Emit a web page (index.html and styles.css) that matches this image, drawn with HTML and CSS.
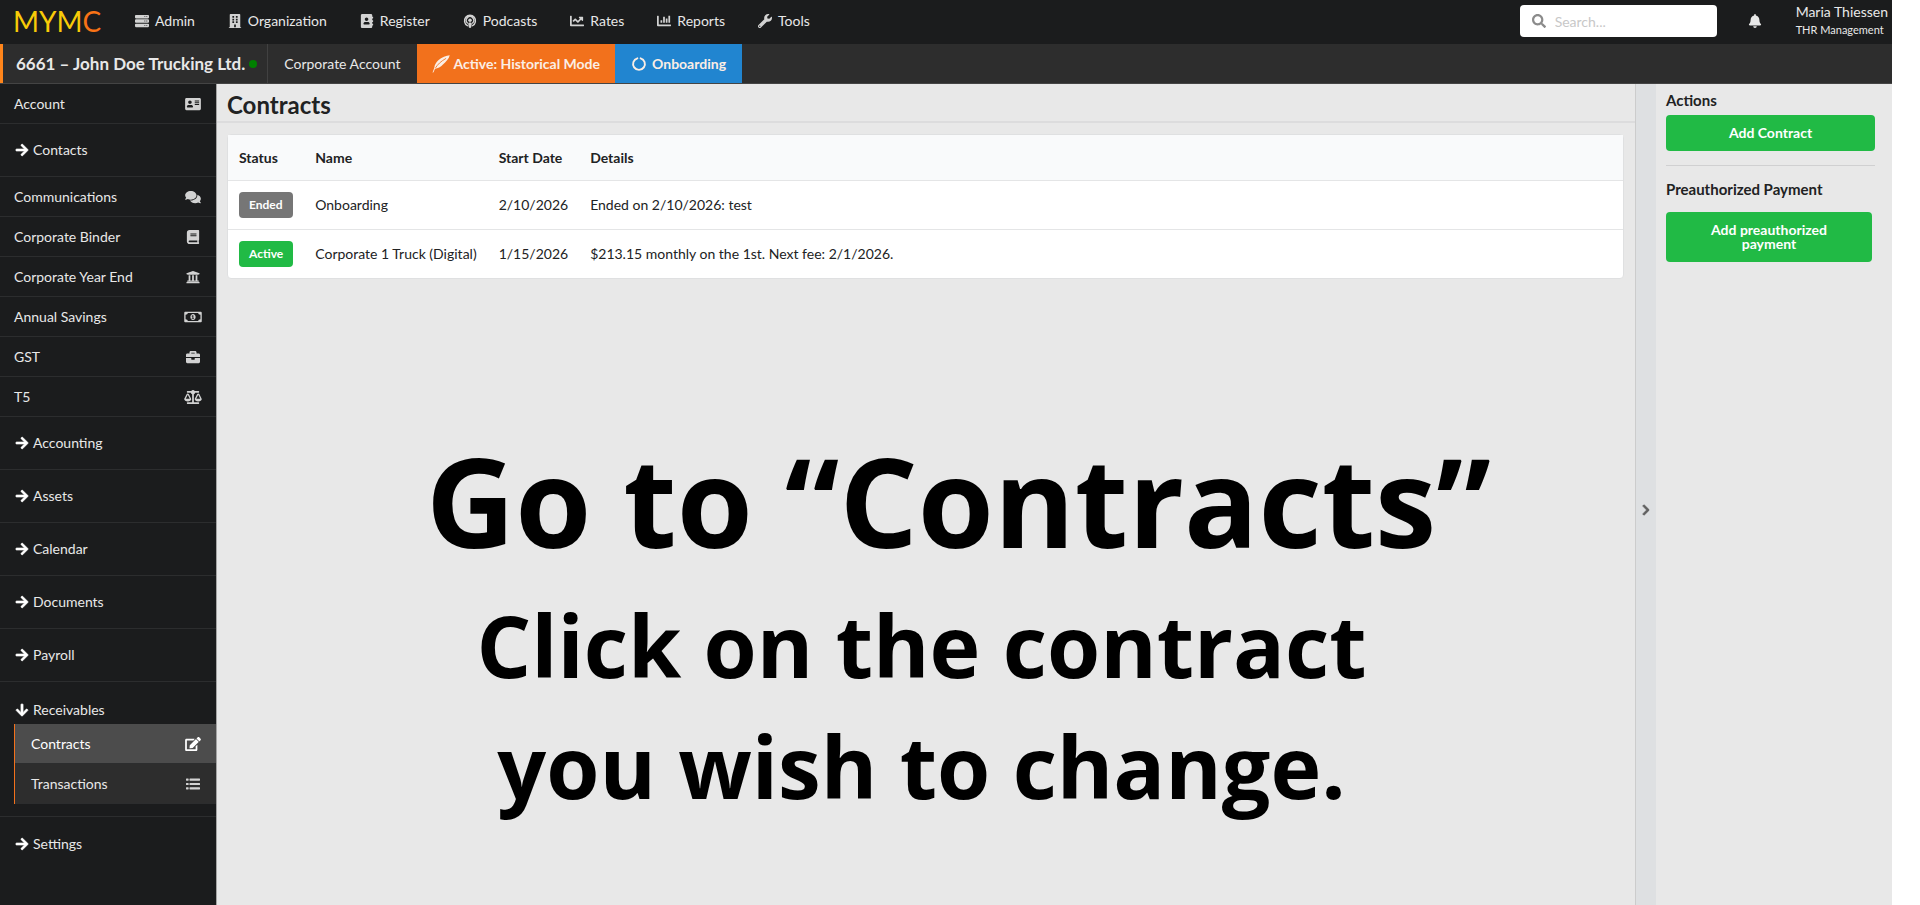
FILE: index.html
```html
<!DOCTYPE html>
<html lang="en">

<head>
    <meta charset="UTF-8">
    <meta name="viewport" content="width=device-width, initial-scale=1">
    <link rel="stylesheet" href="styles.css">
    <title>MYMC - Contracts</title>
</head>

<body>
    <div class="app">
        <header class="topbar">
            <a class="logo" href="#">MYM<span>C</span></a>
            <nav class="topnav">
                <a href="#"><svg class="icon" viewBox="0 0 512 512"><path fill-rule="evenodd" d="M32 32h448c18 0 32 14 32 32v64c0 18-14 32-32 32H32c-18 0-32-14-32-32V64c0-18 14-32 32-32zm312 48v32h32V80zm72 0v32h32V80zM32 192h448c18 0 32 14 32 32v64c0 18-14 32-32 32H32c-18 0-32-14-32-32v-64c0-18 14-32 32-32zm312 48v32h32v-32zm72 0v32h32v-32zM32 352h448c18 0 32 14 32 32v64c0 18-14 32-32 32H32c-18 0-32-14-32-32v-64c0-18 14-32 32-32zm312 48v32h32v-32zm72 0v32h32v-32z"/></svg>Admin</a>
                <a href="#"><svg class="icon" viewBox="0 0 448 512"><path fill-rule="evenodd" d="M436 480h-20V24c0-13-11-24-24-24H56C43 0 32 11 32 24v456H12c-7 0-12 5-12 12v20h448v-20c0-7-5-12-12-12zM128 76h64v64h-64zm128 0h64v64h-64zM128 172h64v64h-64zm128 0h64v64h-64zM128 268h64v64h-64zm128 0h64v64h-64zM192 384h64v96h-64z"/></svg>Organization</a>
                <a href="#"><svg class="icon" viewBox="0 0 448 512"><path fill-rule="evenodd" d="M436 160c7 0 12-5 12-12v-40c0-7-5-12-12-12h-20V48c0-26-22-48-48-48H48C22 0 0 22 0 48v416c0 26 22 48 48 48h320c26 0 48-22 48-48v-48h20c7 0 12-5 12-12v-40c0-7-5-12-12-12h-20v-64h20c7 0 12-5 12-12v-40c0-7-5-12-12-12h-20v-64zM208 128c35 0 64 29 64 64s-29 64-64 64-64-29-64-64 29-64 64-64zm112 237c0 11-10 19-22 19H118c-12 0-22-8-22-19v-19c0-32 30-58 67-58h90c37 0 67 26 67 58z"/></svg>Register</a>
                <a href="#"><svg class="icon" viewBox="0 0 448 512"><path d="M267 489c-5 17-24 23-43 23s-38-6-43-23c-8-28-21-102-21-133 0-35 31-44 64-44s64 9 64 44c0 31-13 105-21 133z"/><circle cx="224" cy="224" r="64"/><path fill="none" stroke="currentColor" stroke-width="52" stroke-linecap="round" d="M126 327a137 137 0 1 1 196 0M130 426a201 201 0 1 1 188 0"/></svg>Podcasts</a>
                <a href="#"><svg class="icon" viewBox="0 0 512 512"><path d="M496 384H64V80c0-8.84-7.16-16-16-16H16C7.16 64 0 71.16 0 80v336c0 17.67 14.33 32 32 32h464c8.84 0 16-7.16 16-16v-32c0-8.84-7.16-16-16-16zM464 96H345.94c-21.38 0-32.09 25.85-16.97 40.97l32.4 32.4L288 242.75l-73.37-73.37c-12.5-12.5-32.76-12.5-45.25 0l-68.69 68.69c-6.25 6.25-6.25 16.38 0 22.63l22.62 22.62c6.25 6.25 16.38 6.25 22.63 0L192 237.25l73.37 73.37c12.5 12.5 32.76 12.5 45.25 0l96-96 32.4 32.4c15.12 15.12 40.97 4.41 40.97-16.97V112c.01-8.84-7.15-16-15.99-16z"/></svg>Rates</a>
                <a href="#"><svg class="icon" viewBox="0 0 512 512"><path d="M496 384H64V80c0-8.84-7.16-16-16-16H16C7.16 64 0 71.16 0 80v336c0 17.67 14.33 32 32 32h464c8.84 0 16-7.16 16-16v-32c0-8.84-7.16-16-16-16zM141 224h38c7 0 13 6 13 13v70c0 7-6 13-13 13h-38c-7 0-13-6-13-13v-70c0-7 6-13 13-13zm96-128h38c7 0 13 6 13 13v198c0 7-6 13-13 13h-38c-7 0-13-6-13-13V109c0-7 6-13 13-13zm96 64h38c7 0 13 6 13 13v134c0 7-6 13-13 13h-38c-7 0-13-6-13-13V173c0-7 6-13 13-13zm96-96h38c7 0 13 6 13 13v230c0 7-6 13-13 13h-38c-7 0-13-6-13-13V77c0-7 6-13 13-13z"/></svg>Reports</a>
                <a href="#"><svg class="icon" viewBox="0 0 512 512"><path d="M507.73 109.1c-2.24-9.03-13.54-12.09-20.12-5.51l-74.36 74.36-67.88-11.31-11.31-67.88 74.36-74.36c6.62-6.62 3.43-17.9-5.66-20.16-47.38-11.74-99.55.91-136.58 37.93-39.64 39.64-50.55 97.1-34.05 147.2L18.74 402.76c-24.99 24.99-24.99 65.51 0 90.5 24.99 24.99 65.51 24.99 90.5 0l213.21-213.21c50.12 16.71 107.47 5.68 147.37-34.22 37.07-37.07 49.7-89.32 37.91-136.73zM64 472c-13.25 0-24-10.75-24-24 0-13.26 10.75-24 24-24s24 10.74 24 24c0 13.25-10.75 24-24 24z"/></svg>Tools</a>
            </nav>
            <label class="search">
                <svg class="icon" viewBox="0 0 512 512"><path d="M505 442.7L405.3 343c-4.5-4.5-10.6-7-17-7H372c27.6-35.3 44-79.7 44-128C416 93.1 322.9 0 208 0S0 93.1 0 208s93.1 208 208 208c48.3 0 92.7-16.4 128-44v16.3c0 6.4 2.5 12.5 7 17l99.7 99.7c9.4 9.4 24.6 9.4 33.9 0l28.3-28.3c9.4-9.4 9.4-24.6.1-34zM208 336c-70.7 0-128-57.2-128-128 0-70.7 57.2-128 128-128 70.7 0 128 57.2 128 128 0 70.7-57.2 128-128 128z"/></svg>
                <input type="text" name="search" placeholder="Search..." aria-label="Search">
            </label>
            <button class="bell" type="button" aria-label="Notifications">
                <svg class="icon" viewBox="0 0 448 512"><path d="M224 512c35.32 0 63.97-28.65 63.97-64H160.03c0 35.35 28.65 64 63.97 64zm215.39-149.71c-19.32-20.76-55.47-51.99-55.47-154.29 0-77.7-54.48-139.9-127.94-155.16V32c0-17.67-14.32-32-31.98-32s-31.98 14.33-31.98 32v20.84C118.56 68.1 64.08 130.3 64.08 208c0 102.3-36.15 133.53-55.47 154.29-6 6.45-8.66 14.16-8.61 21.71.11 16.4 12.98 32 32.1 32h383.8c19.12 0 32-15.6 32.1-32 .05-7.55-2.61-15.27-8.61-21.71z"/></svg>
            </button>
            <a class="user" href="#">Maria Thiessen<small>THR Management</small></a>
        </header>

        <div class="account-bar">
            <a class="account-name" href="#">6661 – John Doe Trucking Ltd.<span class="dot"></span></a>
            <a class="account-type" href="#">Corporate Account</a>
            <a class="mode orange" href="#"><svg class="icon quill" viewBox="0 0 512 512"><path d="M505 4C410 10 270 60 180 150 110 220 70 290 66 360L26 470c-6 18-8 30-6 38 10 0 20-10 26-24l40-94c80-6 160-50 226-118C392 192 480 110 505 4z"/><path class="vein" d="M100 366C160 270 250 180 400 96"/></svg>Active: Historical Mode</a>
            <a class="mode blue" href="#"><svg class="icon" viewBox="0 0 512 512"><path fill="none" stroke="currentColor" stroke-width="70" stroke-linecap="round" d="M316 48a216 216 0 1 1-120 0"/></svg>Onboarding</a>
        </div>

        <div class="body">
            <nav class="sidebar">
                <a class="item" href="#">Account<svg class="icon" viewBox="0 0 576 512"><path fill-rule="evenodd" d="M48 32h480c26 0 48 22 48 48v352c0 26-22 48-48 48H48c-26 0-48-22-48-48V80c0-26 22-48 48-48zm128 96c-35 0-64 29-64 64s29 64 64 64 64-29 64-64-29-64-64-64zm112 237v-19c0-32-30-58-67-58h-90c-37 0-67 26-67 58v19c0 11 10 19 22 19h180c12 0 22-8 22-19zM352 128v32h160v-32zm0 64v32h160v-32zm0 64v32h160v-32z"/></svg></a>
                <a class="group" href="#"><svg class="icon" viewBox="0 0 448 512"><path d="M190.5 66.9l22.2-22.2c9.4-9.4 24.6-9.4 33.9 0L441 239c9.4 9.4 9.4 24.6 0 33.9L246.6 467.3c-9.4 9.4-24.6 9.4-33.9 0l-22.2-22.2c-9.5-9.5-9.3-25 .4-34.3L311.4 296H24c-13.3 0-24-10.7-24-24v-32c0-13.3 10.7-24 24-24h287.4L190.9 101.2c-9.8-9.3-10-24.8-.4-34.3z"/></svg>Contacts</a>
                <a class="item" href="#">Communications<svg class="icon" viewBox="0 0 576 512"><path d="M416 192c0-88.4-93.1-160-208-160S0 103.6 0 192c0 34.3 14.1 65.9 38 92-13.4 30.2-35.5 54.2-35.8 54.5-2.2 2.3-2.8 5.7-1.5 8.7S4.8 352 8 352c36.6 0 66.9-12.3 88.7-25 32.2 15.7 70.3 25 111.3 25 114.9 0 208-71.6 208-160zm122 220c23.9-26 38-57.7 38-92 0-66.9-53.5-124.2-129.3-148.1.9 6.6 1.3 13.3 1.3 20.1 0 105.9-107.7 192-240 192-10.8 0-21.3-.8-31.7-1.9C207.8 439.6 281.8 480 368 480c41 0 79.1-9.2 111.3-25 21.8 12.7 52.1 25 88.7 25 3.2 0 6.1-1.9 7.3-4.8 1.3-2.9.7-6.3-1.5-8.7-.3-.3-22.4-24.2-35.8-54.5z"/></svg></a>
                <a class="item" href="#">Corporate Binder<svg class="icon" viewBox="0 0 448 512"><path d="M448 360V24c0-13.3-10.7-24-24-24H96C43 0 0 43 0 96v320c0 53 43 96 96 96h328c13.3 0 24-10.7 24-24v-16c0-7.5-3.5-14.3-8.9-18.7-4.2-15.4-4.2-59.3 0-74.7 5.4-4.3 8.9-11.1 8.9-18.6zM128 134c0-3.3 2.7-6 6-6h212c3.3 0 6 2.7 6 6v20c0 3.3-2.7 6-6 6H134c-3.3 0-6-2.7-6-6v-20zm0 64c0-3.3 2.7-6 6-6h212c3.3 0 6 2.7 6 6v20c0 3.3-2.7 6-6 6H134c-3.3 0-6-2.7-6-6v-20zm253.4 250H96c-17.7 0-32-14.3-32-32 0-17.6 14.4-32 32-32h285.4c-1.9 17.1-1.9 46.9 0 64z"/></svg></a>
                <a class="item" href="#">Corporate Year End<svg class="icon" viewBox="0 0 512 512"><path d="M496 128v16a8 8 0 0 1-8 8h-24v12c0 6.627-5.373 12-12 12H60c-6.627 0-12-5.373-12-12v-12H24a8 8 0 0 1-8-8v-16a8 8 0 0 1 4.941-7.392l232-88a7.996 7.996 0 0 1 6.118 0l232 88A8 8 0 0 1 496 128zm-24 304H40c-13.255 0-24 10.745-24 24v16a8 8 0 0 0 8 8h464a8 8 0 0 0 8-8v-16c0-13.255-10.745-24-24-24zM96 192v192H60c-6.627 0-12 5.373-12 12v20h416v-20c0-6.627-5.373-12-12-12h-36V192h-64v192h-64V192h-64v192h-64V192H96z"/></svg></a>
                <a class="item" href="#">Annual Savings<svg class="icon" viewBox="0 0 640 512"><path fill-rule="evenodd" d="M32 64h576c18 0 32 14 32 32v320c0 18-14 32-32 32H32c-18 0-32-14-32-32V96c0-18 14-32 32-32zm96 48c0 35-29 64-80 64v160c51 0 80 29 80 64h384c0-35 29-64 80-64V176c-51 0-80-29-80-64zm192 32c53 0 96 50 96 112s-43 112-96 112-96-50-96-112 43-112 96-112zm-16 48l-32 20v24h26v60h-26v24h88v-24h-26V192z"/></svg></a>
                <a class="item" href="#">GST<svg class="icon" viewBox="0 0 512 512"><path d="M320 336c0 8.84-7.16 16-16 16h-96c-8.84 0-16-7.16-16-16v-48H0v144c0 25.6 22.4 48 48 48h416c25.6 0 48-22.4 48-48V288H320v48zm144-208h-80V80c0-25.6-22.4-48-48-48H176c-25.6 0-48 22.4-48 48v48H48c-25.6 0-48 22.4-48 48v80h512v-80c0-25.6-22.4-48-48-48zm-144 0H192V96h128v32z"/></svg></a>
                <a class="item" href="#">T5<svg class="icon" viewBox="0 0 640 512"><path d="M256 336h-.02c0-16.18 1.34-8.73-85.05-181.51-17.65-35.29-68.19-35.36-85.87 0C-2.06 328.75.02 320.33.02 336H0c0 44.18 57.31 80 128 80s128-35.82 128-80zM128 176l72 144H56l72-144zm511.98 160c0-16.18 1.34-8.73-85.05-181.51-17.65-35.29-68.19-35.36-85.87 0-87.12 174.26-85.04 165.84-85.04 181.51H384c0 44.18 57.31 80 128 80s128-35.82 128-80h-.02zM440 320l72-144 72 144H440zm88 128H352V153.25c23.51-10.29 41.16-31.48 46.39-57.25H528c8.84 0 16-7.16 16-16V48c0-8.84-7.16-16-16-16H383.64C369.04 12.68 346.09 0 320 0s-49.04 12.68-63.64 32H112c-8.84 0-16 7.16-16 16v32c0 8.84 7.16 16 16 16h129.61c5.23 25.76 22.87 46.96 46.39 57.25V448H112c-8.84 0-16 7.16-16 16v32c0 8.84 7.16 16 16 16h416c8.84 0 16-7.16 16-16v-32c0-8.84-7.16-16-16-16z"/></svg></a>
                <a class="group" href="#"><svg class="icon" viewBox="0 0 448 512"><path d="M190.5 66.9l22.2-22.2c9.4-9.4 24.6-9.4 33.9 0L441 239c9.4 9.4 9.4 24.6 0 33.9L246.6 467.3c-9.4 9.4-24.6 9.4-33.9 0l-22.2-22.2c-9.5-9.5-9.3-25 .4-34.3L311.4 296H24c-13.3 0-24-10.7-24-24v-32c0-13.3 10.7-24 24-24h287.4L190.9 101.2c-9.8-9.3-10-24.8-.4-34.3z"/></svg>Accounting</a>
                <a class="group" href="#"><svg class="icon" viewBox="0 0 448 512"><path d="M190.5 66.9l22.2-22.2c9.4-9.4 24.6-9.4 33.9 0L441 239c9.4 9.4 9.4 24.6 0 33.9L246.6 467.3c-9.4 9.4-24.6 9.4-33.9 0l-22.2-22.2c-9.5-9.5-9.3-25 .4-34.3L311.4 296H24c-13.3 0-24-10.7-24-24v-32c0-13.3 10.7-24 24-24h287.4L190.9 101.2c-9.8-9.3-10-24.8-.4-34.3z"/></svg>Assets</a>
                <a class="group" href="#"><svg class="icon" viewBox="0 0 448 512"><path d="M190.5 66.9l22.2-22.2c9.4-9.4 24.6-9.4 33.9 0L441 239c9.4 9.4 9.4 24.6 0 33.9L246.6 467.3c-9.4 9.4-24.6 9.4-33.9 0l-22.2-22.2c-9.5-9.5-9.3-25 .4-34.3L311.4 296H24c-13.3 0-24-10.7-24-24v-32c0-13.3 10.7-24 24-24h287.4L190.9 101.2c-9.8-9.3-10-24.8-.4-34.3z"/></svg>Calendar</a>
                <a class="group" href="#"><svg class="icon" viewBox="0 0 448 512"><path d="M190.5 66.9l22.2-22.2c9.4-9.4 24.6-9.4 33.9 0L441 239c9.4 9.4 9.4 24.6 0 33.9L246.6 467.3c-9.4 9.4-24.6 9.4-33.9 0l-22.2-22.2c-9.5-9.5-9.3-25 .4-34.3L311.4 296H24c-13.3 0-24-10.7-24-24v-32c0-13.3 10.7-24 24-24h287.4L190.9 101.2c-9.8-9.3-10-24.8-.4-34.3z"/></svg>Documents</a>
                <a class="group" href="#"><svg class="icon" viewBox="0 0 448 512"><path d="M190.5 66.9l22.2-22.2c9.4-9.4 24.6-9.4 33.9 0L441 239c9.4 9.4 9.4 24.6 0 33.9L246.6 467.3c-9.4 9.4-24.6 9.4-33.9 0l-22.2-22.2c-9.5-9.5-9.3-25 .4-34.3L311.4 296H24c-13.3 0-24-10.7-24-24v-32c0-13.3 10.7-24 24-24h287.4L190.9 101.2c-9.8-9.3-10-24.8-.4-34.3z"/></svg>Payroll</a>
                <div class="open-group">
                    <a class="group" href="#"><svg class="icon" viewBox="0 0 448 512"><path d="M413.1 222.5l22.2 22.2c9.4 9.4 9.4 24.6 0 33.9L241 473c-9.4 9.4-24.6 9.4-33.9 0L12.7 278.6c-9.4-9.4-9.4-24.6 0-33.9l22.2-22.2c9.5-9.5 25-9.3 34.3.4L184 343.4V56c0-13.3 10.7-24 24-24h32c13.3 0 24 10.7 24 24v287.4l114.8-120.5c9.3-9.8 24.8-10 34.3-.4z"/></svg>Receivables</a>
                    <div class="submenu">
                        <a class="item active" href="#">Contracts<svg class="icon" viewBox="0 0 576 512"><path d="M402.6 83.2l90.2 90.2c3.8 3.8 3.8 10 0 13.8L274.4 405.6l-92.8 10.3c-12.4 1.4-22.9-9.1-21.5-21.5l10.3-92.8L388.8 83.2c3.8-3.8 10-3.8 13.8 0zm162-22.9l-48.8-48.8c-15.2-15.2-39.9-15.2-55.2 0l-35.4 35.4c-3.8 3.8-3.8 10 0 13.8l90.2 90.2c3.8 3.8 10 3.8 13.8 0l35.4-35.4c15.2-15.3 15.2-40 0-55.2zM384 346.2V448H64V128h229.8c3.2 0 6.2-1.3 8.5-3.5l40-40c7.6-7.6 2.2-20.5-8.5-20.5H48C21.5 64 0 85.5 0 112v352c0 26.5 21.5 48 48 48h352c26.5 0 48-21.5 48-48V306.2c0-10.7-12.9-16-20.5-8.5l-40 40c-2.2 2.3-3.5 5.3-3.5 8.5z"/></svg></a>
                        <a class="item" href="#">Transactions<svg class="icon" viewBox="0 0 512 512"><path d="M16 56h64c9 0 16 7 16 16v48c0 9-7 16-16 16H16c-9 0-16-7-16-16V72c0-9 7-16 16-16zm0 160h64c9 0 16 7 16 16v48c0 9-7 16-16 16H16c-9 0-16-7-16-16v-48c0-9 7-16 16-16zm0 160h64c9 0 16 7 16 16v48c0 9-7 16-16 16H16c-9 0-16-7-16-16v-48c0-9 7-16 16-16zM144 56h352c9 0 16 7 16 16v48c0 9-7 16-16 16H144c-9 0-16-7-16-16V72c0-9 7-16 16-16zm0 160h352c9 0 16 7 16 16v48c0 9-7 16-16 16H144c-9 0-16-7-16-16v-48c0-9 7-16 16-16zm0 160h352c9 0 16 7 16 16v48c0 9-7 16-16 16H144c-9 0-16-7-16-16v-48c0-9 7-16 16-16z"/></svg></a>
                    </div>
                </div>
                <a class="group last" href="#"><svg class="icon" viewBox="0 0 448 512"><path d="M190.5 66.9l22.2-22.2c9.4-9.4 24.6-9.4 33.9 0L441 239c9.4 9.4 9.4 24.6 0 33.9L246.6 467.3c-9.4 9.4-24.6 9.4-33.9 0l-22.2-22.2c-9.5-9.5-9.3-25 .4-34.3L311.4 296H24c-13.3 0-24-10.7-24-24v-32c0-13.3 10.7-24 24-24h287.4L190.9 101.2c-9.8-9.3-10-24.8-.4-34.3z"/></svg>Settings</a>
            </nav>

            <main class="main">
                <h1 class="page-title">Contracts</h1>
                <div class="content">
                    <table class="contracts">
                        <thead>
                            <tr>
                                <th>Status</th>
                                <th>Name</th>
                                <th>Start Date</th>
                                <th class="details">Details</th>
                            </tr>
                        </thead>
                        <tbody>
                            <tr>
                                <td><span class="label grey">Ended</span></td>
                                <td>Onboarding</td>
                                <td>2/10/2026</td>
                                <td>Ended on 2/10/2026: test</td>
                            </tr>
                            <tr>
                                <td><span class="label green">Active</span></td>
                                <td>Corporate 1 Truck (Digital)</td>
                                <td>1/15/2026</td>
                                <td>$213.15 monthly on the 1st. Next fee: 2/1/2026.</td>
                            </tr>
                        </tbody>
                    </table>
                    <div class="guide">
                        <h2>Go to “Contracts”</h2>
                        <p>Click on the contract<br>you wish to change.</p>
                    </div>
                </div>
            </main>

            <button class="collapse" type="button" aria-label="Collapse actions">
                <svg class="icon" viewBox="0 0 320 512"><path d="M285.476 272.971L91.132 467.314c-9.373 9.373-24.569 9.373-33.941 0l-22.667-22.667c-9.357-9.357-9.375-24.522-.04-33.901L188.505 256 34.484 101.255c-9.335-9.379-9.317-24.544.04-33.901l22.667-22.667c9.373-9.373 24.569-9.373 33.941 0L285.475 239.03c9.373 9.372 9.373 24.568.001 33.941z"/></svg>
            </button>

            <aside class="actions">
                <h3>Actions</h3>
                <button class="btn" type="button">Add Contract</button>
                <hr>
                <h3>Preauthorized Payment</h3>
                <button class="btn tall" type="button">Add preauthorized payment</button>
            </aside>
        </div>
    </div>
</body>

</html>
```

FILE: styles.css
```css
* {
    box-sizing: border-box;
}

body {
    margin: 0;
    padding-right: 28px;
    background: #fff;
    color: #212223;
    font-family: Lato, "Liberation Sans", sans-serif;
    font-size: 14px;
    line-height: 18px;
}

a {
    color: inherit;
    text-decoration: none;
}

button,
input {
    font-family: inherit;
    font-size: 14px;
    margin: 0;
    border: 0;
}

h1,
h2,
h3,
p {
    margin: 0;
}

.app {
    display: flex;
    flex-direction: column;
    min-height: 100vh;
    background: #e8e8e8;
}

.icon {
    flex: none;
    width: 16px;
    height: 14px;
    fill: currentColor;
}

/* top bar */
.topbar {
    display: flex;
    align-items: center;
    height: 44px;
    padding-bottom: 2px;
    background: #1b1c1d;
    color: #e8e8e8;
}

.logo {
    width: 118px;
    padding-left: 13px;
    color: #f8cb08;
    font-size: 28px;
    line-height: 42px;
}

.logo span {
    color: #f97316;
}

.topnav {
    display: flex;
    flex: 1;
}

.topnav a {
    display: flex;
    align-items: center;
    gap: 5px;
    padding: 0 16px;
    line-height: 36px;
}

.topnav .icon {
    color: #d2d2d2;
}

.search {
    display: flex;
    align-items: center;
    gap: 8px;
    width: 197px;
    height: 32px;
    padding: 0 11px;
    background: #fff;
    border-radius: 4px;
    color: #8b8b8b;
}

.search input {
    width: 100%;
    min-width: 0;
    padding: 0;
    outline: none;
    background: none;
}

.search input::placeholder {
    color: #c8c8c8;
}

.bell {
    display: flex;
    margin: 0 33px 0 30px;
    padding: 0;
    background: none;
    color: #e8e8e8;
}

.user {
    padding-right: 4px;
    line-height: 18px;
}

.user small {
    display: block;
    font-size: 11px;
}

/* account bar */
.account-bar {
    display: flex;
    height: 40px;
    background: #2d2d2d;
    border-bottom: 1px solid #444;
    color: #e8e8e8;
    line-height: 39px;
}

.account-name {
    display: flex;
    align-items: center;
    gap: 4px;
    padding: 0 10px 0 13px;
    border-left: 3px solid #ff851b;
    border-right: 1px solid #414141;
    font-size: 17px;
    font-weight: bold;
}

.dot {
    width: 8px;
    height: 8px;
    border-radius: 50%;
    background: #008000;
}

.account-type {
    padding: 0 16px;
}

.mode {
    display: flex;
    align-items: center;
    gap: 5px;
    padding: 0 16px;
    color: #fbeee5;
    font-weight: bold;
}

.orange {
    gap: 4px;
    padding: 0 15px;
    background: #f2711c;
}

.blue {
    background: #2185d0;
}

.quill {
    width: 18px;
    height: 18px;
}

.vein {
    fill: none;
    stroke: #f2711c;
    stroke-width: 24;
}

.body {
    display: flex;
    flex: 1;
}

/* left menu */
.sidebar {
    flex: none;
    width: 217px;
    background: #1b1c1d;
    border-right: 1px solid #a4a4a4;
    color: #e8e8e8;
}

.item,
.group {
    display: flex;
    align-items: center;
    border-bottom: 1px solid #2c2d2e;
}

.item {
    justify-content: space-between;
    height: 40px;
    padding: 0 14px;
}

.item .icon {
    width: 18px;
    color: #d2d2d2;
}

.group {
    gap: 3px;
    height: 53px;
    padding: 0 14px;
}

.group .icon {
    color: #fff;
    stroke: #fff;
    stroke-width: 20;
    overflow: visible;
}

.open-group {
    padding-bottom: 12px;
    border-bottom: 1px solid #2c2d2e;
}

.open-group .group {
    height: 42px;
    padding-top: 14px;
    border: 0;
}

.submenu {
    margin-left: 14px;
    background: #2d2d2d;
    border-left: 1px solid #f2711c;
}

.submenu .item {
    padding-left: 16px;
}

.submenu .active {
    background: #4c4c4c;
    color: #fff;
}

.submenu .active .icon {
    color: #fff;
}

.last {
    border: 0;
}

/* contracts */
.main {
    flex: 1;
    min-width: 0;
}

.page-title {
    padding: 4px 10px 0;
    border-bottom: 2px solid #dcdcdd;
    font-size: 24px;
    line-height: 33px;
}

.content {
    padding: 11px 11px 11px 10px;
}

.contracts {
    width: 100%;
    background: #fff;
    border: 1px solid #dfe0e1;
    border-radius: 4px;
    border-spacing: 0;
}

.contracts th,
.contracts td {
    height: 49px;
    padding: 0 11px;
    text-align: left;
    white-space: nowrap;
}

.contracts th {
    height: 45px;
    background: #f9fafb;
}

.contracts td {
    border-top: 1px solid #e4e5e6;
}

.contracts .details {
    width: 100%;
}

.label {
    display: inline-block;
    padding: 0 10px;
    border-radius: 4px;
    color: #fff;
    font-size: 12px;
    font-weight: bold;
    line-height: 26px;
}

.grey {
    background: #767676;
}

.green {
    background: #21ba45;
}

.guide {
    padding-top: 139px;
    color: #000;
    font-family: "Open Sans", "Noto Sans", sans-serif;
    font-weight: bold;
    text-align: center;
}

.guide h2 {
    padding-left: 66px;
    font-size: 123px;
    line-height: 166px;
    white-space: nowrap;
}

.guide p {
    padding-right: 8px;
    font-size: 86px;
    line-height: 121px;
    white-space: nowrap;
}

/* right column */
.collapse {
    display: flex;
    align-items: center;
    justify-content: center;
    width: 21px;
    padding: 30px 0 0;
    background: #dee0e2;
    border-left: 1px solid #ccc;
    color: #606060;
}

.collapse .icon {
    width: 12px;
    height: 12px;
    stroke: currentColor;
    stroke-width: 36;
}

.actions {
    flex: none;
    width: 236px;
    padding: 6px 17px 0 10px;
}

.actions h3 {
    font-size: 15px;
    line-height: 20px;
}

.actions hr {
    margin: 14px 0 13px;
    border: 0;
    border-top: 1px solid #d0d0d1;
}

.btn {
    width: 100%;
    margin-top: 5px;
    padding: 11px 20px;
    border-radius: 4px;
    background: #21ba45;
    color: #fff;
    font-weight: bold;
    line-height: 14px;
}

.tall {
    width: calc(100% - 3px);
    margin-top: 13px;
    padding: 11px 40px;
}
```
